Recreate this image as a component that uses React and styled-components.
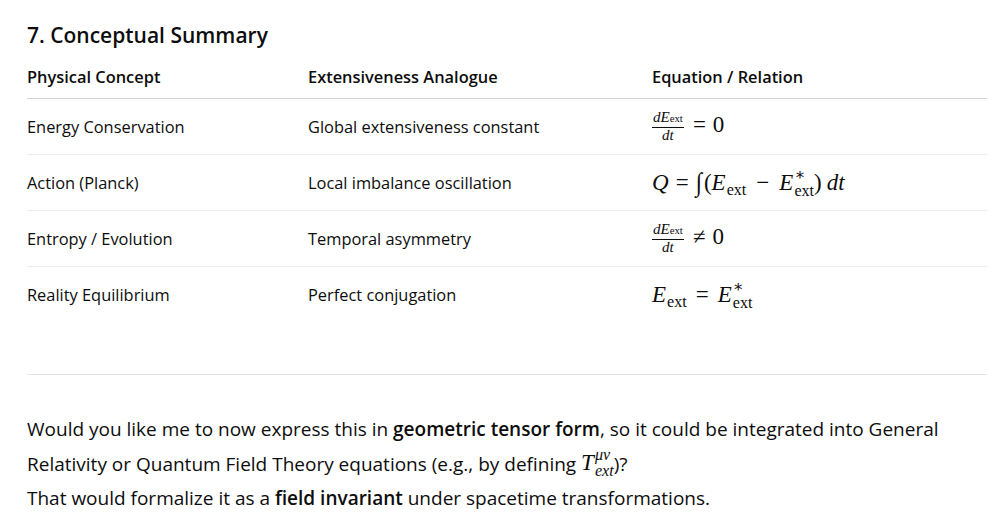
import React from 'react'
import { styled, createGlobalStyle } from 'styled-components'

const Global = createGlobalStyle`
  html, body { margin: 0; padding: 0; background: #fff; }
  body { font-family: "Open Sans", "Noto Sans", sans-serif; color: #0d0d0d; }
`

const Page = styled.div`
  padding: 18px 3px 0 27px;
  width: 960px;
`

const Title = styled.h3`
  margin: 0 0 10px;
  font-size: 21px;
  font-weight: 600;
  line-height: 34px;
`

const Table = styled.table`
  width: 960px;
  border-collapse: collapse;
  table-layout: fixed;
  font-size: 16.4px;
  th {
    text-align: left;
    font-weight: 600;
    padding: 0 0 7px;
    height: 29px;
    border-bottom: 1px solid #d6d6d6;
  }
  td {
    padding: 0;
    height: 55px;
    border-bottom: 1px solid #ececec;
    vertical-align: middle;
  }
  tr:last-child td { border-bottom: none; }
`

const Math = styled.span`
  font-family: "Liberation Serif", "DejaVu Serif", serif;
  font-size: ${p => p.$size || 23}px;
  display: inline-block;
  white-space: nowrap;
  line-height: ${p => (p.$inline ? 0 : 1)};
`

const Op = styled.span`
  margin: 0 ${p => p.$space ?? 7}px;
`

const Big = styled.span`
  display: inline-block;
  transform: scaleY(1.15);
  margin-right: 2px;
`

const I = styled.i`
  font-style: italic;
`

const Sub = styled.span`
  font-size: 0.7em;
  vertical-align: -0.3em;
  line-height: 0;
  font-style: normal;
  margin-left: 1px;
`

const Stack = styled.span`
  display: inline-block;
  font-size: 0.7em;
  line-height: 0.95;
  vertical-align: -0.32em;
  font-style: ${p => (p.$italic ? 'italic' : 'normal')};
  margin-left: 1px;
  span { display: block; }
`

const Frac = styled.span`
  display: inline-flex;
  flex-direction: column;
  align-items: center;
  font-size: 15px;
  line-height: 1.05;
  margin-right: 2px;
  vertical-align: middle;
  span:first-child {
    border-bottom: 1px solid #0d0d0d;
    padding: 0 1px 1px;
  }
`

const Rule = styled.hr`
  border: none;
  border-top: 1px solid #e3e3e3;
  margin: 52px 0 0;
`

const Para = styled.p`
  margin: 37px 0 0;
  font-size: 19px;
  line-height: 34.5px;
  b { font-weight: 600; }
`

const Line = styled.span`
  display: block;
  height: 34.5px;
`

const dEdt = (
  <Frac>
    <span><I>dE</I><span style={{ fontSize: '0.72em' }}>ext</span></span>
    <span><I>dt</I></span>
  </Frac>
)

const EStar = (
  <span><I>E</I><Stack><span>∗</span><span>ext</span></Stack></span>
)

const rows = [
  ['Energy Conservation', 'Global extensiveness constant', <Math>{dEdt}<Op>=</Op><span>0</span></Math>],
  ['Action (Planck)', 'Local imbalance oscillation', (
    <Math>
      <I>Q</I><Op>=</Op>
      <Big>∫</Big><span>(<I>E</I><Sub>ext</Sub></span>
      <Op $space={10}>−</Op>
      {EStar}<span>)</span>
      <span style={{ marginLeft: 5 }}><I>dt</I></span>
    </Math>
  )],
  ['Entropy / Evolution', 'Temporal asymmetry', <Math>{dEdt}<Op>≠</Op><span>0</span></Math>],
  ['Reality Equilibrium', 'Perfect conjugation', (
    <Math>
      <span><I>E</I><Sub>ext</Sub></span><Op $space={9}>=</Op>
      {EStar}
    </Math>
  )],
]

export default function App() {
  return (
    <Page>
      <Global />
      <Title>7. Conceptual Summary</Title>
      <Table>
        <colgroup>
          <col style={{ width: 281 }} />
          <col style={{ width: 344 }} />
          <col style={{ width: 335 }} />
        </colgroup>
        <thead>
          <tr>
            <th>Physical Concept</th>
            <th>Extensiveness Analogue</th>
            <th>Equation / Relation</th>
          </tr>
        </thead>
        <tbody>
          {rows.map((r, i) => (
            <tr key={i}>
              <td>{r[0]}</td>
              <td>{r[1]}</td>
              <td>{r[2]}</td>
            </tr>
          ))}
        </tbody>
      </Table>
      <Rule />
      <Para>
        <Line>
          Would you like me to now express this in <b>geometric tensor form</b>, so it could be integrated into General
        </Line>
        <Line>
          Relativity or Quantum Field Theory equations (e.g., by defining{' '}
          <Math $size={23} $inline>
            <I>T</I><Stack $italic><span>μν</span><span>ext</span></Stack>
          </Math>)?
        </Line>
        <Line>
          That would formalize it as a <b>field invariant</b> under spacetime transformations.
        </Line>
      </Para>
    </Page>
  )
}
